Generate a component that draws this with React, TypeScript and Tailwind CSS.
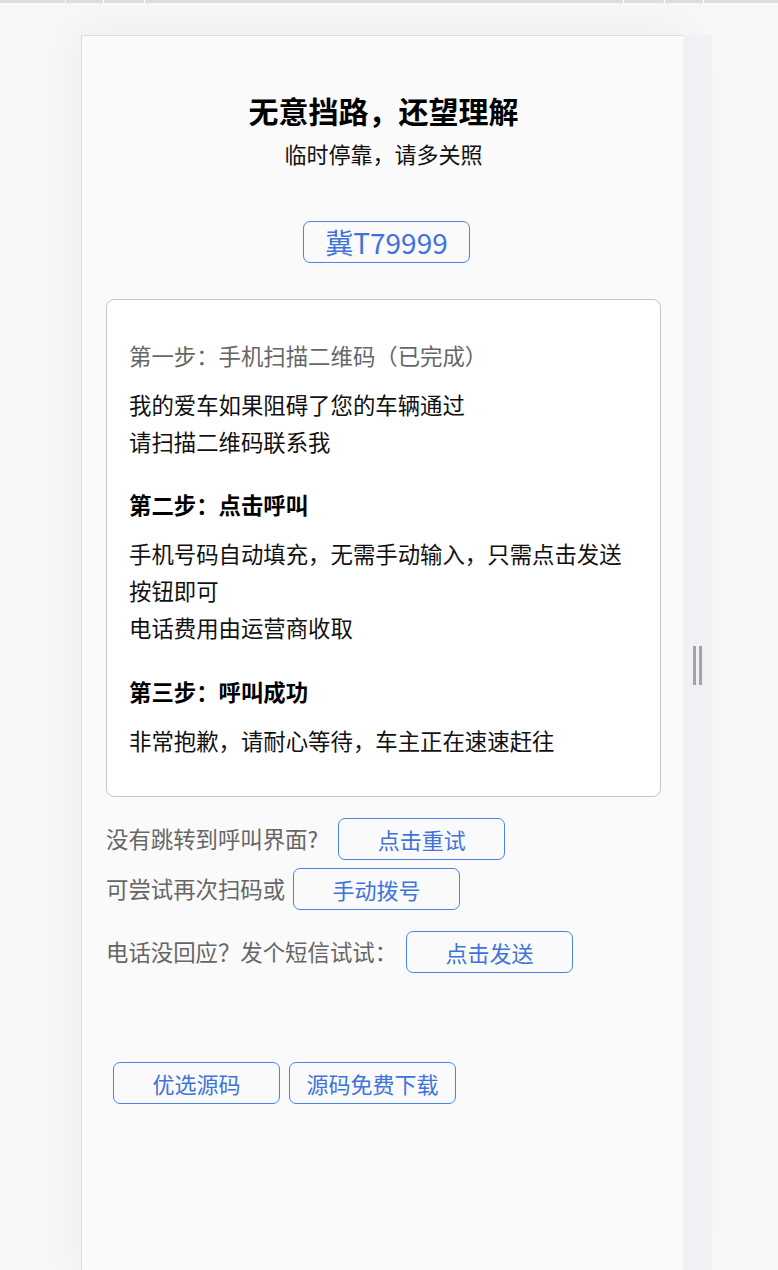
import React from 'react';

const FONT = { fontFamily: '"Noto Sans CJK SC", "Noto Sans", sans-serif' };

const ActionButton: React.FC<{ label: string; className?: string }> = ({ label, className = '' }) => (
  <button
    type="button"
    className={`w-[167px] h-[42px] shrink-0 rounded-[7px] border border-[#4a84e4] bg-transparent text-[22px] leading-[40px] text-[#3e74da] ${className}`}
  >
    {label}
  </button>
);

const Step: React.FC<{ title: string; done?: boolean; lines: string[]; className?: string }> = ({
  title,
  done,
  lines,
  className = '',
}) => (
  <div className={className}>
    <p className={done ? 'text-[#666]' : 'font-bold text-black'}>{title}</p>
    <div className="mt-[12px] text-[#111]">
      {lines.map((l) => (
        <p key={l}>{l}</p>
      ))}
    </div>
  </div>
);

export default function App() {
  return (
    <div className="min-h-[1270px] bg-[#f6f7f7] overflow-hidden" style={FONT}>
      {/* browser chrome strip */}
      <div className="h-[3px] bg-[#dcdce3] flex">
        <span className="ml-[65px] w-px bg-white" />
        <span className="ml-[37px] w-px bg-white" />
        <span className="ml-[40px] w-px bg-white" />
        <span className="ml-[478px] w-px bg-white" />
        <span className="ml-[40px] w-px bg-white" />
        <span className="ml-[38px] w-px bg-white" />
      </div>

      <div className="flex pl-[81px] pt-[32px]">
        {/* phone page */}
        <div className="w-[602px] min-h-[1235px] border-l border-t border-[#dcdcdc] bg-[#fafafa] pt-[54px] pl-[24px] pr-[22px] shadow-[0_0_40px_rgba(0,0,0,0.05)]">
          <h1 className="text-center text-[30px] font-bold leading-[40px] text-black">无意挡路，还望理解</h1>
          <p className="mt-[8px] text-center text-[22px] leading-[30px] text-[#111]">临时停靠，请多关照</p>

          <div className="mt-[53px] flex justify-center">
            <div className="ml-[6px] w-[167px] h-[42px] rounded-[7px] border border-[#4a84e4] text-center text-[28px] leading-[40px] text-[#3e74da]">
              冀T79999
            </div>
          </div>

          <div className="mt-[36px] rounded-[8px] border border-[#c6c6c6] bg-white pt-[37px] pb-[37px] pl-[22px] pr-[24px] text-[22.4px] leading-[37px]">
            <Step
              done
              title="第一步：手机扫描二维码（已完成）"
              lines={['我的爱车如果阻碍了您的车辆通过', '请扫描二维码联系我']}
            />
            <Step
              className="mt-[26px]"
              title="第二步：点击呼叫"
              lines={['手机号码自动填充，无需手动输入，只需点击发送按钮即可', '电话费用由运营商收取']}
            />
            <Step
              className="mt-[27px]"
              title="第三步：呼叫成功"
              lines={['非常抱歉，请耐心等待，车主正在速速赶往']}
            />
          </div>

          <div className="mt-[21px] text-[22.4px] text-[#666]">
            <div className="flex items-center">
              <span>没有跳转到呼叫界面?</span>
              <ActionButton label="点击重试" className="ml-[20px]" />
            </div>
            <div className="mt-[8px] flex items-center">
              <span>可尝试再次扫码或</span>
              <ActionButton label="手动拨号" className="ml-[8px]" />
            </div>
            <div className="mt-[21px] flex items-center">
              <span>电话没回应？发个短信试试：</span>
              <ActionButton label="点击发送" className="ml-[9px]" />
            </div>
          </div>

          <div className="mt-[89px] ml-[7px] flex gap-[9px]">
            <ActionButton label="优选源码" />
            <ActionButton label="源码免费下载" />
          </div>
        </div>

        {/* resize handle strip */}
        <div className="w-[29px] bg-[#f0f1f4] pt-[611px] flex justify-center">
          <div className="flex gap-[3px] h-[39px]">
            <span className="w-[3px] bg-[#a3a3a3]" />
            <span className="w-[3px] bg-[#a3a3a3]" />
          </div>
        </div>
      </div>
    </div>
  );
}
